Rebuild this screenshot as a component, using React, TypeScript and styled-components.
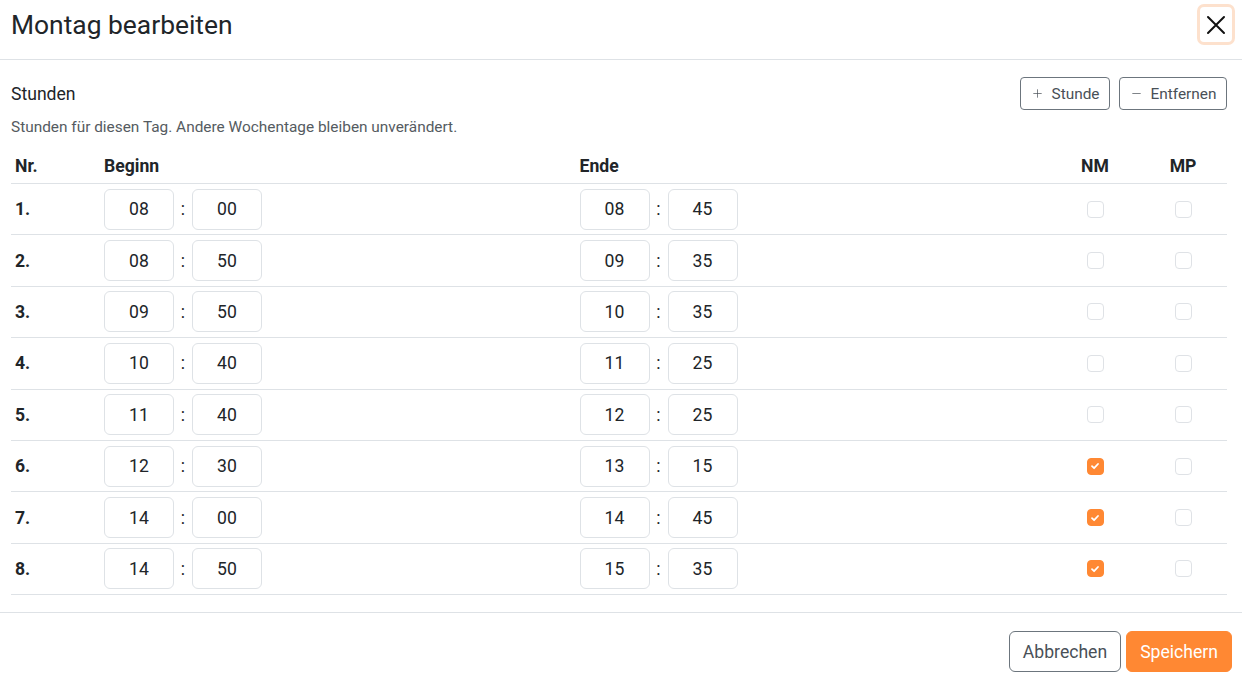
import React, { useState } from 'react';
import styled, { createGlobalStyle } from 'styled-components';
import { Plus, Minus } from 'lucide-react';

const GlobalStyle = createGlobalStyle`
  html, body {
    margin: 0;
    padding: 0;
    background: #ffffff;
    font-family: Roboto, 'Noto Sans', 'Liberation Sans', sans-serif;
    color: #212529;
  }
  * { box-sizing: border-box; }
`;

const Dialog = styled.div`
  width: 1242px;
  height: 685px;
  display: flex;
  flex-direction: column;
  background: #ffffff;
`;

const Header = styled.div`
  height: 60px;
  display: flex;
  align-items: flex-start;
  justify-content: space-between;
  padding: 0 7px 0 11px;
  border-bottom: 1px solid #dee2e6;
`;

const Title = styled.h1`
  margin: 0;
  font-size: 26.4px;
  font-weight: 400;
  line-height: 50px;
  color: #212529;
`;

const CloseButton = styled.button`
  margin-top: 4px;
  width: 38px;
  height: 41px;
  display: flex;
  align-items: center;
  justify-content: center;
  background: #ffffff;
  border: 3px solid #fde1cd;
  border-radius: 7px;
  padding: 0;
  cursor: pointer;
`;

const Body = styled.div`
  padding: 17px 15px 0 11px;
`;

const Toolbar = styled.div`
  height: 33px;
  display: flex;
  align-items: center;
  justify-content: space-between;
`;

const SectionTitle = styled.span`
  font-size: 17.6px;
  color: #212529;
`;

const ToolGroup = styled.div`
  display: flex;
  gap: 9px;
`;

const OutlineButton = styled.button<{ $width: number }>`
  width: ${p => p.$width}px;
  height: 33px;
  display: flex;
  align-items: center;
  justify-content: center;
  gap: 8px;
  border: 1px solid #6c757d;
  border-radius: 4px;
  background: #ffffff;
  color: #495057;
  font-family: inherit;
  font-size: 15.4px;
  padding: 0 6px;
  cursor: pointer;
`;

const Hint = styled.p`
  margin: 7px 0 0;
  font-size: 15.4px;
  line-height: 20px;
  color: #555b61;
`;

const Table = styled.div`
  margin-top: 8px;
  display: grid;
  grid-template-columns: 89px 1fr 1fr 88px 88px;
`;

const HeadCell = styled.div<{ $center?: boolean }>`
  padding: 11px 4px 7px;
  font-size: 17.6px;
  line-height: 20px;
  font-weight: 700;
  text-align: ${p => (p.$center ? 'center' : 'left')};
  border-bottom: 1px solid #dee2e6;
`;

const Cell = styled.div<{ $center?: boolean }>`
  height: 51.4px;
  padding: 0 4px;
  display: flex;
  align-items: center;
  justify-content: ${p => (p.$center ? 'center' : 'flex-start')};
  border-bottom: 1px solid #dee2e6;
`;

const RowNumber = styled.span`
  font-size: 17.6px;
  font-weight: 700;
`;

const TimeGroup = styled.div`
  display: flex;
  align-items: center;
`;

const TimeInput = styled.input`
  width: 70px;
  height: 41px;
  border: 1px solid #dee2e6;
  border-radius: 6px;
  text-align: center;
  font-family: inherit;
  font-size: 17.6px;
  color: #212529;
  background: #ffffff;
  outline: none;
`;

const Colon = styled.span`
  width: 18px;
  text-align: center;
  font-size: 17.6px;
  color: #212529;
`;

const CheckBox = styled.span<{ $checked: boolean }>`
  width: 17px;
  height: 17px;
  border-radius: 4px;
  display: flex;
  align-items: center;
  justify-content: center;
  border: 1px solid ${p => (p.$checked ? '#ff8833' : '#dfe2e6')};
  background: ${p => (p.$checked ? '#ff8833' : '#ffffff')};
  cursor: pointer;
`;

const Footer = styled.div`
  margin-top: 17px;
  border-top: 1px solid #dee2e6;
  padding: 18px 10px 0;
  display: flex;
  justify-content: flex-end;
  gap: 5px;
`;

const FooterButton = styled.button<{ $primary?: boolean }>`
  height: 41px;
  padding: 0 13px;
  border-radius: 6px;
  font-family: inherit;
  font-size: 17.6px;
  font-weight: 400;
  border: 1px solid ${p => (p.$primary ? '#ff8833' : '#6c757d')};
  background: ${p => (p.$primary ? '#ff8833' : '#ffffff')};
  color: ${p => (p.$primary ? '#ffffff' : '#495057')};
  cursor: pointer;
`;

type Lesson = { start: [string, string]; end: [string, string]; nm: boolean; mp: boolean };

const initialLessons: Lesson[] = [
  { start: ['08', '00'], end: ['08', '45'], nm: false, mp: false },
  { start: ['08', '50'], end: ['09', '35'], nm: false, mp: false },
  { start: ['09', '50'], end: ['10', '35'], nm: false, mp: false },
  { start: ['10', '40'], end: ['11', '25'], nm: false, mp: false },
  { start: ['11', '40'], end: ['12', '25'], nm: false, mp: false },
  { start: ['12', '30'], end: ['13', '15'], nm: true, mp: false },
  { start: ['14', '00'], end: ['14', '45'], nm: true, mp: false },
  { start: ['14', '50'], end: ['15', '35'], nm: true, mp: false },
];

const Check: React.FC<{ checked: boolean; onClick: () => void }> = ({ checked, onClick }) => (
  <CheckBox $checked={checked} onClick={onClick}>
    {checked && (
      <svg width="10" height="10" viewBox="0 0 10 10">
        <path d="M2 5.2 L4.1 7.2 L8 3" fill="none" stroke="#ffffff" strokeWidth="1.8" strokeLinecap="round" strokeLinejoin="round" />
      </svg>
    )}
  </CheckBox>
);

const Time: React.FC<{ value: [string, string] }> = ({ value }) => (
  <TimeGroup>
    <TimeInput defaultValue={value[0]} />
    <Colon>:</Colon>
    <TimeInput defaultValue={value[1]} />
  </TimeGroup>
);

const App: React.FC = () => {
  const [lessons, setLessons] = useState<Lesson[]>(initialLessons);

  const toggle = (index: number, key: 'nm' | 'mp') => {
    setLessons(prev => prev.map((l, i) => (i === index ? { ...l, [key]: !l[key] } : l)));
  };

  return (
    <>
      <GlobalStyle />
      <Dialog>
        <Header>
          <Title>Montag bearbeiten</Title>
          <CloseButton aria-label="Schließen">
            <svg width="20" height="20" viewBox="0 0 20 20">
              <path d="M2 2 L18 18 M18 2 L2 18" stroke="#111111" strokeWidth="2" strokeLinecap="round" />
            </svg>
          </CloseButton>
        </Header>
        <Body>
          <Toolbar>
            <SectionTitle>Stunden</SectionTitle>
            <ToolGroup>
              <OutlineButton $width={90}>
                <Plus size={13} strokeWidth={1.3} />
                Stunde
              </OutlineButton>
              <OutlineButton $width={108}>
                <Minus size={13} strokeWidth={1.3} />
                Entfernen
              </OutlineButton>
            </ToolGroup>
          </Toolbar>
          <Hint>Stunden für diesen Tag. Andere Wochentage bleiben unverändert.</Hint>
          <Table>
            <HeadCell>Nr.</HeadCell>
            <HeadCell>Beginn</HeadCell>
            <HeadCell>Ende</HeadCell>
            <HeadCell $center>NM</HeadCell>
            <HeadCell $center>MP</HeadCell>
            {lessons.map((l, i) => (
              <React.Fragment key={i}>
                <Cell>
                  <RowNumber>{i + 1}.</RowNumber>
                </Cell>
                <Cell>
                  <Time value={l.start} />
                </Cell>
                <Cell>
                  <Time value={l.end} />
                </Cell>
                <Cell $center>
                  <Check checked={l.nm} onClick={() => toggle(i, 'nm')} />
                </Cell>
                <Cell $center>
                  <Check checked={l.mp} onClick={() => toggle(i, 'mp')} />
                </Cell>
              </React.Fragment>
            ))}
          </Table>
        </Body>
        <Footer>
          <FooterButton>Abbrechen</FooterButton>
          <FooterButton $primary>Speichern</FooterButton>
        </Footer>
      </Dialog>
    </>
  );
};

export default App;
